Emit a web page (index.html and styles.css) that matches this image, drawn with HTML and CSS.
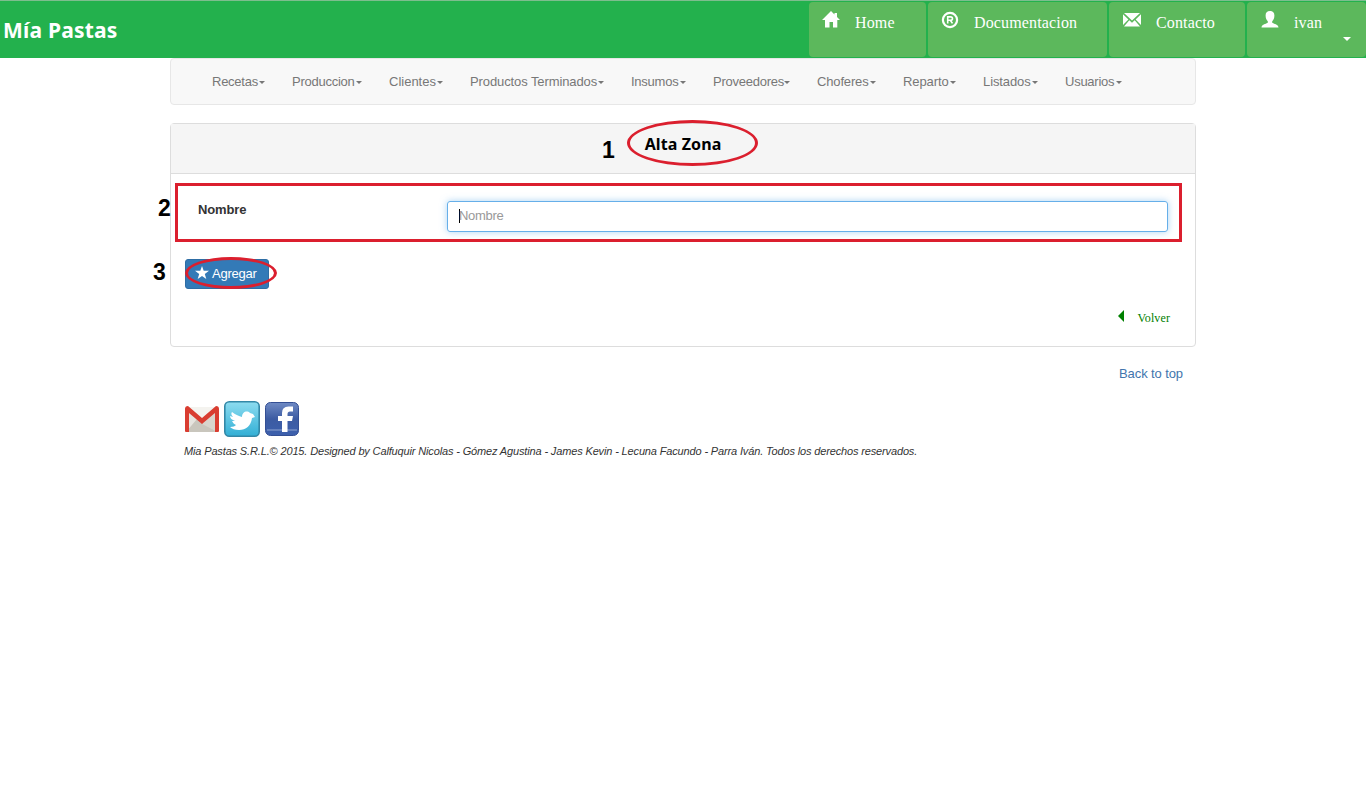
FILE: index.html
```html
<!DOCTYPE html>
<html lang="es">
<head>
<meta charset="utf-8">
<title>Mía Pastas</title>
<link rel="stylesheet" href="styles.css">
</head>
<body>
<header class="topbar">
  <div class="brand">Mía Pastas</div>
  <nav class="quick">
    <a class="quick-link home"><svg class="icon" viewBox="0 0 18 18"><path d="M9 0L12.5 3.5V2H15V6L18 9H15.3V16.5H11V11H7.5V16.5H3V9H0Z"/></svg><span class="label">Home</span></a>
    <a class="quick-link docs"><svg class="icon" viewBox="0 0 18 18"><circle class="ring" cx="9" cy="9" r="7.1"/><path class="mark" d="M6.7 12.4V5.9H9.5Q11.5 5.9 11.5 7.7Q11.5 9.3 9.5 9.3H7M9.3 9.3L11.5 12.4"/></svg><span class="label">Documentacion</span></a>
    <a class="quick-link mail"><svg class="icon" viewBox="0 0 18 18"><path d="M1 2H17L9 9.5ZM0 3.2L5.4 8.4L0 14ZM18 3.2V14L12.6 8.4ZM6.3 9.3L9 11.8L11.7 9.3L17 15.5H1Z"/></svg><span class="label">Contacto</span></a>
    <a class="quick-link user"><svg class="icon" viewBox="0 0 18 18"><path d="M9 0C6 0 4.6 1.7 4.6 4.5C4.6 7.5 5.6 9.2 6.8 10.2V11.8C5.3 12.8 .5 13.5 .5 16.5H17.5C17.5 13.5 12.7 12.8 11.2 11.8V10.2C12.4 9.2 13.4 7.5 13.4 4.5C13.4 1.7 12 0 9 0Z"/></svg><span class="label">ivan</span><i class="caret white"></i></a>
  </nav>
</header>
<div class="container">
  <ul class="menu">
    <li><span class="label">Recetas</span><i class="caret"></i></li>
    <li><span class="label">Produccion</span><i class="caret"></i></li>
    <li><span class="label">Clientes</span><i class="caret"></i></li>
    <li><span class="label">Productos Terminados</span><i class="caret"></i></li>
    <li><span class="label">Insumos</span><i class="caret"></i></li>
    <li><span class="label">Proveedores</span><i class="caret"></i></li>
    <li><span class="label">Choferes</span><i class="caret"></i></li>
    <li><span class="label">Reparto</span><i class="caret"></i></li>
    <li><span class="label">Listados</span><i class="caret"></i></li>
    <li><span class="label">Usuarios</span><i class="caret"></i></li>
  </ul>
  <main class="panel">
    <h1 class="panel-title">Alta Zona</h1>
    <div class="panel-body">
      <div class="field">
        <label class="field-label">Nombre</label>
        <div class="field-input"><i class="cursor"></i><span>Nombre</span></div>
      </div>
      <button class="submit"><svg class="star" viewBox="0 0 14 13"><path d="M7 0L8.7 4.8H14L9.8 7.9L11.3 13L7 10L2.7 13L4.2 7.9L0 4.8H5.3Z"/></svg><span>Agregar</span></button>
      <a class="back"><i class="arrow"></i><span>Volver</span></a>
    </div>
  </main>
  <footer class="footer">
    <a class="to-top">Back to top</a>
    <div class="social">
      <svg class="social-icon" viewBox="0 0 36 36">
        <path fill="#e6e4df" d="M2 6H34V31H2Z"/><path fill="#c9c6bd" d="M2 31L13 18L18 22L34 31Z"/><path fill="#d8d5cd" d="M18 23L34 10V31Z"/><path fill="#f4f3ef" d="M5 6H31L18 18Z"/>
        <path fill="#d93d31" d="M1 8Q1 5 4 5L18 17L32 5Q35 5 35 8V30Q35 31 34 31H31V12L18 23L5 12V31H2Q1 31 1 30Z"/>
      </svg>
      <svg class="social-icon" viewBox="0 0 36 36">
        <defs><linearGradient id="sky" x1="0" y1="0" x2="0" y2="1"><stop offset="0" stop-color="#8ddcf0"/><stop offset="1" stop-color="#32afd5"/></linearGradient></defs>
        <rect x=".8" y=".8" width="34.4" height="34.4" rx="4.5" fill="url(#sky)" stroke="#3388a7" stroke-width="1.6"/>
        <path fill="#fff" d="M8 11C12 14 15 15 18 16C18 11 23 9 26 12L29 13L31 16L28 17C27 25 22 29 15 29C11 29 8 28 6 26C9 26 11 25 12 24C10 23 9 22 8 20H11C8 19 6 17 6 15L9 16C7 14 7 12 8 11Z"/>
      </svg>
      <svg class="social-icon" viewBox="0 0 36 36">
        <defs><linearGradient id="navy" x1="0" y1="0" x2="0" y2="1"><stop offset="0" stop-color="#6f8ac4"/><stop offset=".5" stop-color="#3c5ba2"/><stop offset="1" stop-color="#3d60ad"/></linearGradient></defs>
        <rect x="1.5" y="1.5" width="33" height="33" rx="5" fill="url(#navy)" stroke="#344f94"/>
        <path fill="none" stroke="#90a5d1" d="M3 29H33"/>
        <path fill="#fff" d="M18 31V20H14V15H18V12Q18 5.5 24.5 5.5H29V10.5H26Q23.5 10.5 23.5 13V15H29L28 20H23.5V31Z"/>
      </svg>
    </div>
    <p class="credits"><span>Mia Pastas S.R.L.© 2015. Designed by Calfuquir Nicolas - Gómez Agustina - James Kevin - Lecuna Facundo - Parra Iván. Todos los derechos reservados.</span></p>
  </footer>
</div>
<div class="note n1">1</div>
<div class="note n2">2</div>
<div class="note n3">3</div>
<div class="mark-oval around-title"></div>
<div class="mark-box"></div>
<div class="mark-oval around-submit"></div>
</body>
</html>
```

FILE: styles.css
```css
* { box-sizing: border-box; }
body { margin: 0; position: relative; height: 790px; overflow: hidden; background: #fff; color: #333; font: 13px/18px "Liberation Sans", Arial, sans-serif; white-space: nowrap; }
.topbar { height: 58px; display: flex; justify-content: space-between; background: #23b14d; border-top: 1px solid #7dbd8e; }
.brand { padding: 15px 0 0 3px; color: #fff; font: bold 21px/28px "Noto Sans", sans-serif; letter-spacing: .2px; }
.quick { display: flex; gap: 2px; padding: 1px 0; }
.quick-link { display: flex; align-items: flex-start; padding: 9px 0 0 14px; background: #5cb85c; border-radius: 4px; color: #fff; font: 16px/24px "Liberation Serif", serif; letter-spacing: .15px; }
.quick-link .label { margin-left: 15px; }
.home { width: 117px; }
.docs { width: 179px; }
.home, .docs { padding-left: 13px; }
.mail { width: 136px; }
.user { width: 119px; }
.icon { width: 18px; height: 18px; fill: #fff; }
.ring { fill: none; stroke: #fff; stroke-width: 2.2; }
.mark { fill: none; stroke: #fff; stroke-width: 1.6; }
.caret { width: 0; height: 0; border: 3px solid transparent; border-top-color: #777; border-bottom: 0; }
.caret.white { border-width: 4px 4px 0; border-top-color: #fff; margin: 26px 0 0 21px; }
.container { width: 1026px; margin: 0 auto; }
.menu { height: 47px; margin: 0 0 18px; padding: 0 0 0 41px; display: flex; align-items: center; gap: 27px; list-style: none; background: #f8f8f8; border: 1px solid #e7e7e7; border-radius: 4px; color: #777; }
.menu li { display: flex; align-items: center; justify-content: space-between; width: 53px; letter-spacing: -.25px; }
.menu li:nth-child(2) { width: 70px; }
.menu li:nth-child(3) { width: 54px; letter-spacing: 0; }
.menu li:nth-child(4) { width: 134px; letter-spacing: -.1px; }
.menu li:nth-child(5) { width: 55px; }
.menu li:nth-child(6) { width: 77px; }
.menu li:nth-child(7) { width: 59px; letter-spacing: -.15px; }
.menu li:nth-child(8) { letter-spacing: -.1px; }
.menu li:nth-child(9) { width: 55px; letter-spacing: -.1px; }
.menu li:nth-child(10) { width: 57px; }
.menu .caret { margin-top: 2px; }
.panel { height: 224px; border: 1px solid #ddd; border-radius: 4px; }
.panel-title { height: 50px; margin: 0; padding-top: 9px; background: #f5f5f5; border-bottom: 1px solid #ddd; color: #000; text-align: center; font: bold 16px/22px "Noto Sans", sans-serif; letter-spacing: .1px; }
.panel-body { display: flex; flex-direction: column; padding: 27px 27px 0 14px; }
.field { display: flex; justify-content: space-between; padding-left: 13px; }
.field-label { font-weight: bold; letter-spacing: -.15px; }
.field-input { width: 721px; height: 31px; display: flex; align-items: center; padding: 0 0 2px 11px; border: 1px solid #66afe9; border-radius: 3px; color: #999; letter-spacing: -.3px; box-shadow: 0 0 7px rgba(102, 175, 233, .55); }
.cursor { width: 1px; height: 14px; margin-right: -1px; background: #000; }
.submit { width: 84px; height: 30px; margin: 27px 0 0; padding: 0 0 0 9px; display: flex; align-items: center; gap: 3px; background: #337ab7; border: 1px solid #2e6da4; border-radius: 3px; color: #fff; font: 13px/18px "Liberation Sans", Arial, sans-serif; letter-spacing: -.25px; }
.star { width: 14px; height: 13px; margin-top: -3px; fill: #fff; }
.back { align-self: flex-end; display: flex; align-items: center; gap: 14px; margin: 19px -2px 0 0; color: #008000; font: 12px/20px "Liberation Serif", serif; letter-spacing: .1px; }
.arrow { border: 6px solid transparent; border-right-color: #008000; border-left: 0; margin-top: -4px; }
.footer { display: flex; flex-direction: column; padding: 18px 13px 0 14px; }
.to-top { align-self: flex-end; color: #4275ad; letter-spacing: -.1px; }
.social { display: flex; gap: 4px; margin-top: 18px; }
.social-icon { width: 36px; height: 36px; }
.credits { margin: 6px 0 0; font-size: 11px; line-height: 16px; font-style: italic; letter-spacing: -.145px; }
.note { position: absolute; color: #000; font: bold 23px/26px "Liberation Sans", Arial, sans-serif; }
.n1 { left: 602px; top: 137px; }
.n2 { left: 158px; top: 195px; }
.n3 { left: 153px; top: 259px; }
.mark-oval { position: absolute; border: 3px solid #db1f2e; border-radius: 50%; }
.around-title { left: 627px; top: 120px; width: 131px; height: 46px; }
.around-submit { left: 185px; top: 257px; width: 92px; height: 32px; }
.mark-box { position: absolute; left: 175px; top: 183px; width: 1007px; height: 59px; border: 3px solid #db1f2e; }
```
